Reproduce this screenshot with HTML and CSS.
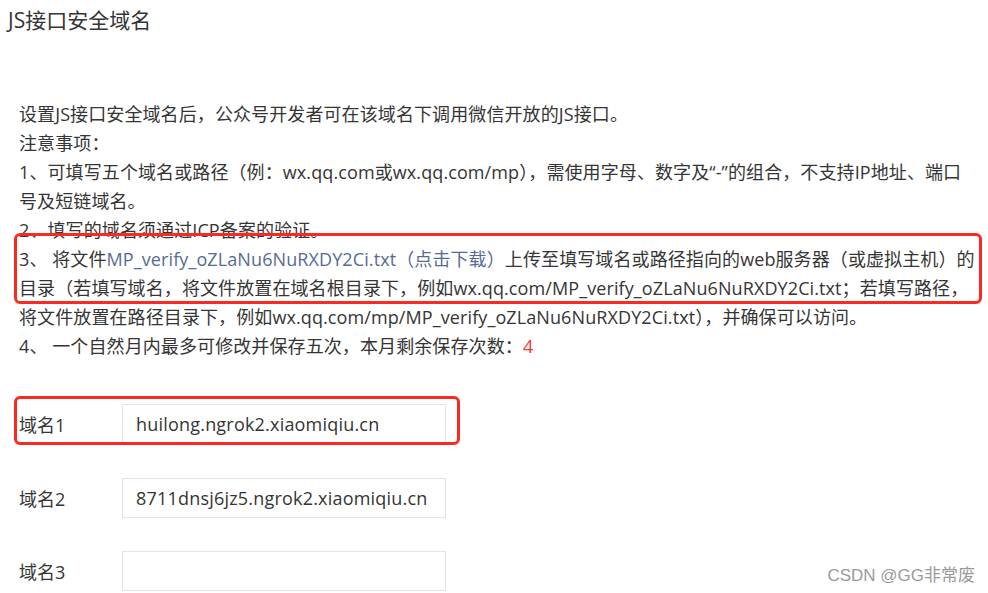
FILE: index.html
```html
<!DOCTYPE html>
<html lang="zh-CN">
<head>
    <meta charset="UTF-8">
    <meta name="viewport" content="width=device-width, initial-scale=1.0">
    <title>JS接口安全域名</title>
    <link rel="stylesheet" href="styles.css">
</head>
<body>
    <div class="page">
        <h2 class="pageTitle">JS接口安全域名</h2>

        <div class="notice">
            <p>设置JS接口安全域名后，公众号开发者可在该域名下调用微信开放的JS接口。</p>
            <p>注意事项：</p>
            <p>1、可填写五个域名或路径（例：wx.qq.com或wx.qq.com/mp），需使用字母、数字及“-”的组合，不支持IP地址、端口号及短链域名。</p>
            <p>2、填写的域名须通过ICP备案的验证。</p>
            <p>3、 将文件<a href="#" class="link">MP_verify_oZLaNu6NuRXDY2Ci.txt（点击下载）</a>上传至填写域名或路径指向的web服务器（或虚拟主机）的目录（若填写域名，将文件放置在域名根目录下，例如wx.qq.com/MP_verify_oZLaNu6NuRXDY2Ci.txt；若填写路径，将文件放置在路径目录下，例如wx.qq.com/mp/MP_verify_oZLaNu6NuRXDY2Ci.txt），并确保可以访问。</p>
            <p>4、 一个自然月内最多可修改并保存五次，本月剩余保存次数：<span class="count">4</span></p>

            <!-- 标注框 -->
            <div class="mark markNotice"></div>
        </div>

        <form class="domainForm">
            <div class="domainRow">
                <label class="domainLabel" for="domain1">域名1</label>
                <input type="text" class="domainInput" id="domain1" value="huilong.ngrok2.xiaomiqiu.cn">
                <div class="mark markRow"></div>
            </div>
            <div class="domainRow">
                <label class="domainLabel" for="domain2">域名2</label>
                <input type="text" class="domainInput" id="domain2" value="8711dnsj6jz5.ngrok2.xiaomiqiu.cn">
            </div>
            <div class="domainRow">
                <label class="domainLabel" for="domain3">域名3</label>
                <input type="text" class="domainInput" id="domain3" value="">
            </div>
        </form>

        <div class="watermark">CSDN @GG非常废</div>
    </div>
</body>
</html>
```

FILE: styles.css
```css
/* Base */
body {
    margin: 0;
    font-family: "Open Sans", "Noto Sans CJK SC", sans-serif;
    color: #353535;
    background-color: #ffffff;
}

.page {
    position: relative;
    height: 593px;
    overflow: hidden;
}

/* Title */
.pageTitle {
    margin: 0;
    padding: 0 0 0 8px;
    height: 40px;
    line-height: 40px;
    font-size: 21px;
    font-weight: normal;
}

/* Notice text */
.notice {
    position: relative;
    margin-top: 60px;
    padding-left: 19px;
    width: 960px;
    font-size: 18px;
    line-height: 29px;
    letter-spacing: 0.1px;
}

.notice p {
    margin: 0;
}

.link {
    color: #576b95;
    text-decoration: none;
}

.count {
    color: #f43530;
}

/* Red annotation boxes */
.mark {
    position: absolute;
    border: 3px solid #fa2a22;
    border-radius: 6px;
    pointer-events: none;
}

.markNotice {
    top: 133px;
    left: 14px;
    width: 962px;
    height: 65px;
}

.markRow {
    top: -8px;
    left: -5px;
    width: 440px;
    height: 43px;
}

/* Domain form */
.domainForm {
    margin: 43px 0 0 0;
    padding-left: 19px;
    display: flex;
    flex-direction: column;
    gap: 33.5px;
}

.domainRow {
    position: relative;
    display: flex;
    align-items: center;
    height: 40px;
}

.domainLabel {
    width: 103px;
    font-size: 18px;
}

.domainInput {
    box-sizing: border-box;
    width: 324px;
    height: 40px;
    padding: 0 13px;
    border: 1px solid #e4e4e7;
    border-radius: 0;
    outline: none;
    font-family: inherit;
    font-size: 18px;
    letter-spacing: 0.2px;
    color: #353535;
    background-color: #ffffff;
}

/* Watermark */
.watermark {
    position: absolute;
    right: 13px;
    bottom: 7px;
    font-family: "Liberation Sans", "Noto Sans CJK SC", sans-serif;
    font-size: 17px;
    color: #9a9a9a;
    text-shadow: 0 0 2px #ffffff;
}
```
